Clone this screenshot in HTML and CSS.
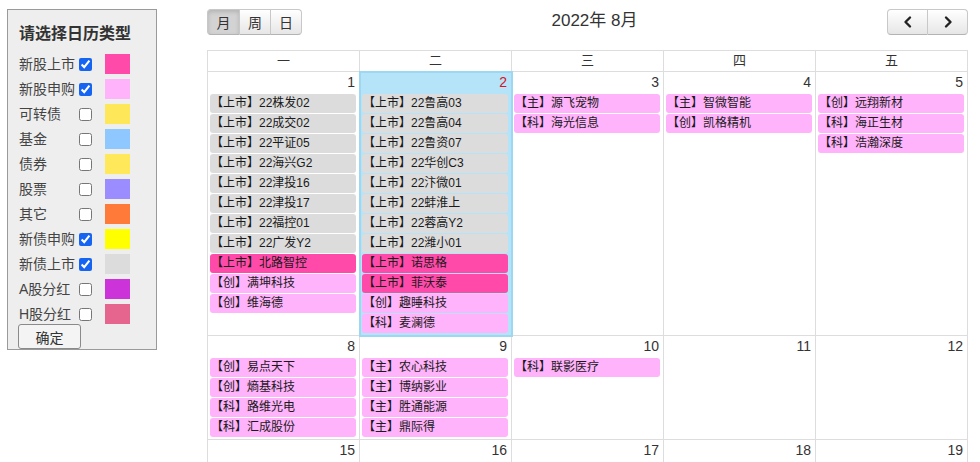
FILE: index.html
```html
<!DOCTYPE html>
<html lang="zh">
<head>
<meta charset="utf-8">
<title>日历</title>
<link rel="stylesheet" href="styles.css">
</head>
<body>
<div class="page">
  <aside class="panel">
    <div class="panel-title">请选择日历类型</div>
    <div class="opt"><span class="opt-label">新股上市</span><input type="checkbox" checked><span class="swatch c-ss"></span></div>
    <div class="opt"><span class="opt-label">新股申购</span><input type="checkbox" checked><span class="swatch c-sg"></span></div>
    <div class="opt"><span class="opt-label">可转债</span><input type="checkbox"><span class="swatch c-kzz"></span></div>
    <div class="opt"><span class="opt-label">基金</span><input type="checkbox"><span class="swatch c-jj"></span></div>
    <div class="opt"><span class="opt-label">债券</span><input type="checkbox"><span class="swatch c-zq"></span></div>
    <div class="opt"><span class="opt-label">股票</span><input type="checkbox"><span class="swatch c-gp"></span></div>
    <div class="opt"><span class="opt-label">其它</span><input type="checkbox"><span class="swatch c-qt"></span></div>
    <div class="opt"><span class="opt-label">新债申购</span><input type="checkbox" checked><span class="swatch c-zsg"></span></div>
    <div class="opt"><span class="opt-label">新债上市</span><input type="checkbox" checked><span class="swatch c-zss"></span></div>
    <div class="opt"><span class="opt-label">A股分红</span><input type="checkbox"><span class="swatch c-afh"></span></div>
    <div class="opt"><span class="opt-label">H股分红</span><input type="checkbox"><span class="swatch c-hfh"></span></div>
    <button class="ok-btn" type="button">确定</button>
  </aside>

  <main class="cal">
    <div class="toolbar">
      <div class="btn-group">
        <button class="tb-btn active" type="button">月</button><button class="tb-btn" type="button">周</button><button class="tb-btn" type="button">日</button>
      </div>
      <div class="cal-title">2022年 8月</div>
      <div class="btn-group">
        <button class="tb-btn nav" type="button"><svg width="14" height="14" viewBox="0 0 14 14"><polyline points="9,2.5 4.5,7 9,11.5" fill="none" stroke="#222" stroke-width="2.4" stroke-linecap="round" stroke-linejoin="round"/></svg></button><button class="tb-btn nav" type="button"><svg width="14" height="14" viewBox="0 0 14 14"><polyline points="5,2.5 9.5,7 5,11.5" fill="none" stroke="#222" stroke-width="2.4" stroke-linecap="round" stroke-linejoin="round"/></svg></button>
      </div>
    </div>

    <div class="grid">
      <div class="wd">一</div><div class="wd">二</div><div class="wd">三</div><div class="wd">四</div><div class="wd">五</div>

      <div class="day">
        <div class="num">1</div>
        <div class="ev e-zss">【上市】22株发02</div>
        <div class="ev e-zss">【上市】22成交02</div>
        <div class="ev e-zss">【上市】22平证05</div>
        <div class="ev e-zss">【上市】22海兴G2</div>
        <div class="ev e-zss">【上市】22津投16</div>
        <div class="ev e-zss">【上市】22津投17</div>
        <div class="ev e-zss">【上市】22福控01</div>
        <div class="ev e-zss">【上市】22广发Y2</div>
        <div class="ev e-ss">【上市】北路智控</div>
        <div class="ev e-sg">【创】满坤科技</div>
        <div class="ev e-sg">【创】维海德</div>
      </div>
      <div class="day today">
        <div class="num">2</div>
        <div class="ev e-zss">【上市】22鲁高03</div>
        <div class="ev e-zss">【上市】22鲁高04</div>
        <div class="ev e-zss">【上市】22鲁资07</div>
        <div class="ev e-zss">【上市】22华创C3</div>
        <div class="ev e-zss">【上市】22汴微01</div>
        <div class="ev e-zss">【上市】22蚌淮上</div>
        <div class="ev e-zss">【上市】22蓉高Y2</div>
        <div class="ev e-zss">【上市】22潍小01</div>
        <div class="ev e-ss">【上市】诺思格</div>
        <div class="ev e-ss">【上市】菲沃泰</div>
        <div class="ev e-sg">【创】趣睡科技</div>
        <div class="ev e-sg">【科】麦澜德</div>
      </div>
      <div class="day">
        <div class="num">3</div>
        <div class="ev e-sg">【主】源飞宠物</div>
        <div class="ev e-sg">【科】海光信息</div>
      </div>
      <div class="day">
        <div class="num">4</div>
        <div class="ev e-sg">【主】智微智能</div>
        <div class="ev e-sg">【创】凯格精机</div>
      </div>
      <div class="day">
        <div class="num">5</div>
        <div class="ev e-sg">【创】远翔新材</div>
        <div class="ev e-sg">【科】海正生材</div>
        <div class="ev e-sg">【科】浩瀚深度</div>
      </div>

      <div class="day">
        <div class="num">8</div>
        <div class="ev e-sg">【创】易点天下</div>
        <div class="ev e-sg">【创】熵基科技</div>
        <div class="ev e-sg">【科】路维光电</div>
        <div class="ev e-sg">【科】汇成股份</div>
      </div>
      <div class="day">
        <div class="num">9</div>
        <div class="ev e-sg">【主】农心科技</div>
        <div class="ev e-sg">【主】博纳影业</div>
        <div class="ev e-sg">【主】胜通能源</div>
        <div class="ev e-sg">【主】鼎际得</div>
      </div>
      <div class="day">
        <div class="num">10</div>
        <div class="ev e-sg">【科】联影医疗</div>
      </div>
      <div class="day"><div class="num">11</div></div>
      <div class="day"><div class="num">12</div></div>

      <div class="day tall"><div class="num">15</div></div>
      <div class="day tall"><div class="num">16</div></div>
      <div class="day tall"><div class="num">17</div></div>
      <div class="day tall"><div class="num">18</div></div>
      <div class="day tall"><div class="num">19</div></div>
    </div>
  </main>
</div>
</body>
</html>
```

FILE: styles.css
```css
* { box-sizing: border-box; }
html, body { margin: 0; padding: 0; background: #fff; }
body {
  font-family: "Liberation Sans", "Noto Sans CJK SC", sans-serif;
  color: #333;
  overflow: hidden;
  height: 462px;
}
.page {
  display: flex;
  align-items: flex-start;
  padding: 9px 0 0 7px;
}

/* ---------- left panel ---------- */
.panel {
  width: 150px;
  background: #eeeeee;
  border: 1px solid #9a9a9a;
  padding: 11px 0 0 11px;
  display: flex;
  flex-direction: column;
}
.panel-title {
  font-size: 16px;
  font-weight: bold;
  line-height: 26px;
  color: #333;
  margin-bottom: 7px;
}
.opt {
  display: flex;
  align-items: center;
  height: 20px;
  margin-bottom: 5px;
}
.opt:last-of-type { margin-bottom: 0; }
.opt-label {
  width: 60px;
  font-size: 14px;
  line-height: 20px;
  color: #444;
  white-space: nowrap;
}
.opt input {
  margin: 0;
  width: 13px;
  height: 13px;
  accent-color: #1565f2;
}
.swatch {
  width: 25px;
  height: 20px;
  margin-left: 13px;
}
.c-ss  { background: #ff4aaa; }
.c-sg  { background: #ffb3fb; }
.c-kzz { background: #ffe75a; }
.c-jj  { background: #8ec8ff; }
.c-zq  { background: #ffe85a; }
.c-gp  { background: #9b8cff; }
.c-qt  { background: #ff7a38; }
.c-zsg { background: #ffff00; }
.c-zss { background: #dcdcdc; }
.c-afh { background: #cc33d8; }
.c-hfh { background: #e6658e; }

.ok-btn {
  align-self: flex-start;
  margin-left: -1px;
  width: 63px;
  height: 25px;
  font-family: inherit;
  font-size: 14px;
  color: #333;
  background: #f4f4f4;
  border: 1px solid #8a8a8a;
  border-radius: 3px;
  padding: 0;
}

/* ---------- calendar ---------- */
.cal {
  margin-left: 50px;
  width: 761px;
}
.toolbar {
  display: flex;
  justify-content: space-between;
  align-items: center;
  height: 26px;
  margin-bottom: 15px;
}
.btn-group { display: flex; }
.tb-btn {
  height: 26px;
  padding: 0;
  font-family: inherit;
  font-size: 14px;
  color: #333;
  background: linear-gradient(#ffffff, #e6e6e6);
  border: 1px solid #c8c8c8;
  border-bottom-color: #b3b3b3;
  border-left-width: 0;
  width: 31px;
  display: flex;
  align-items: center;
  justify-content: center;
}
.tb-btn:first-child {
  border-left-width: 1px;
  border-radius: 4px 0 0 4px;
  width: 33px;
}
.tb-btn:last-child { border-radius: 0 4px 4px 0; }
.tb-btn.active {
  background: #d3d3d3;
  box-shadow: inset 0 2px 4px rgba(0,0,0,0.15);
}
.tb-btn.nav { width: 40px; }
.tb-btn.nav:first-child { width: 41px; }
.cal-title {
  font-size: 17px;
  color: #333;
  line-height: 20px;
  margin-top: -3px;
}

.grid {
  display: grid;
  grid-template-columns: repeat(5, 152px);
  border-left: 1px solid #dddddd;
  border-top: 1px solid #dddddd;
}
.wd {
  height: 21px;
  line-height: 20px;
  text-align: center;
  font-size: 13px;
  color: #333;
  border-right: 1px solid #dddddd;
  border-bottom: 1px solid #dddddd;
}
.day {
  border-right: 1px solid #dddddd;
  border-bottom: 1px solid #dddddd;
  padding-bottom: 1px;
}
.day.tall { min-height: 60px; }
.day.today {
  background: #b5e3f8;
  outline: 2px solid #9dd7f1;
  outline-offset: -1px;
  position: relative;
}
.num {
  font-size: 14px;
  text-align: right;
  line-height: 18px;
  padding: 1px 4px 3px 0;
  color: #333;
}
.today .num { color: #dd1122; }
.ev {
  height: 19px;
  line-height: 19px;
  margin: 0 3px 1px 2px;
  padding-left: 1px;
  border-radius: 3px;
  font-size: 12px;
  color: #1a1a1a;
  white-space: nowrap;
  overflow: hidden;
}
.e-zss { background: #dcdcdc; }
.e-ss  { background: #ff4aaa; }
.e-sg  { background: #ffb3fb; }
```
